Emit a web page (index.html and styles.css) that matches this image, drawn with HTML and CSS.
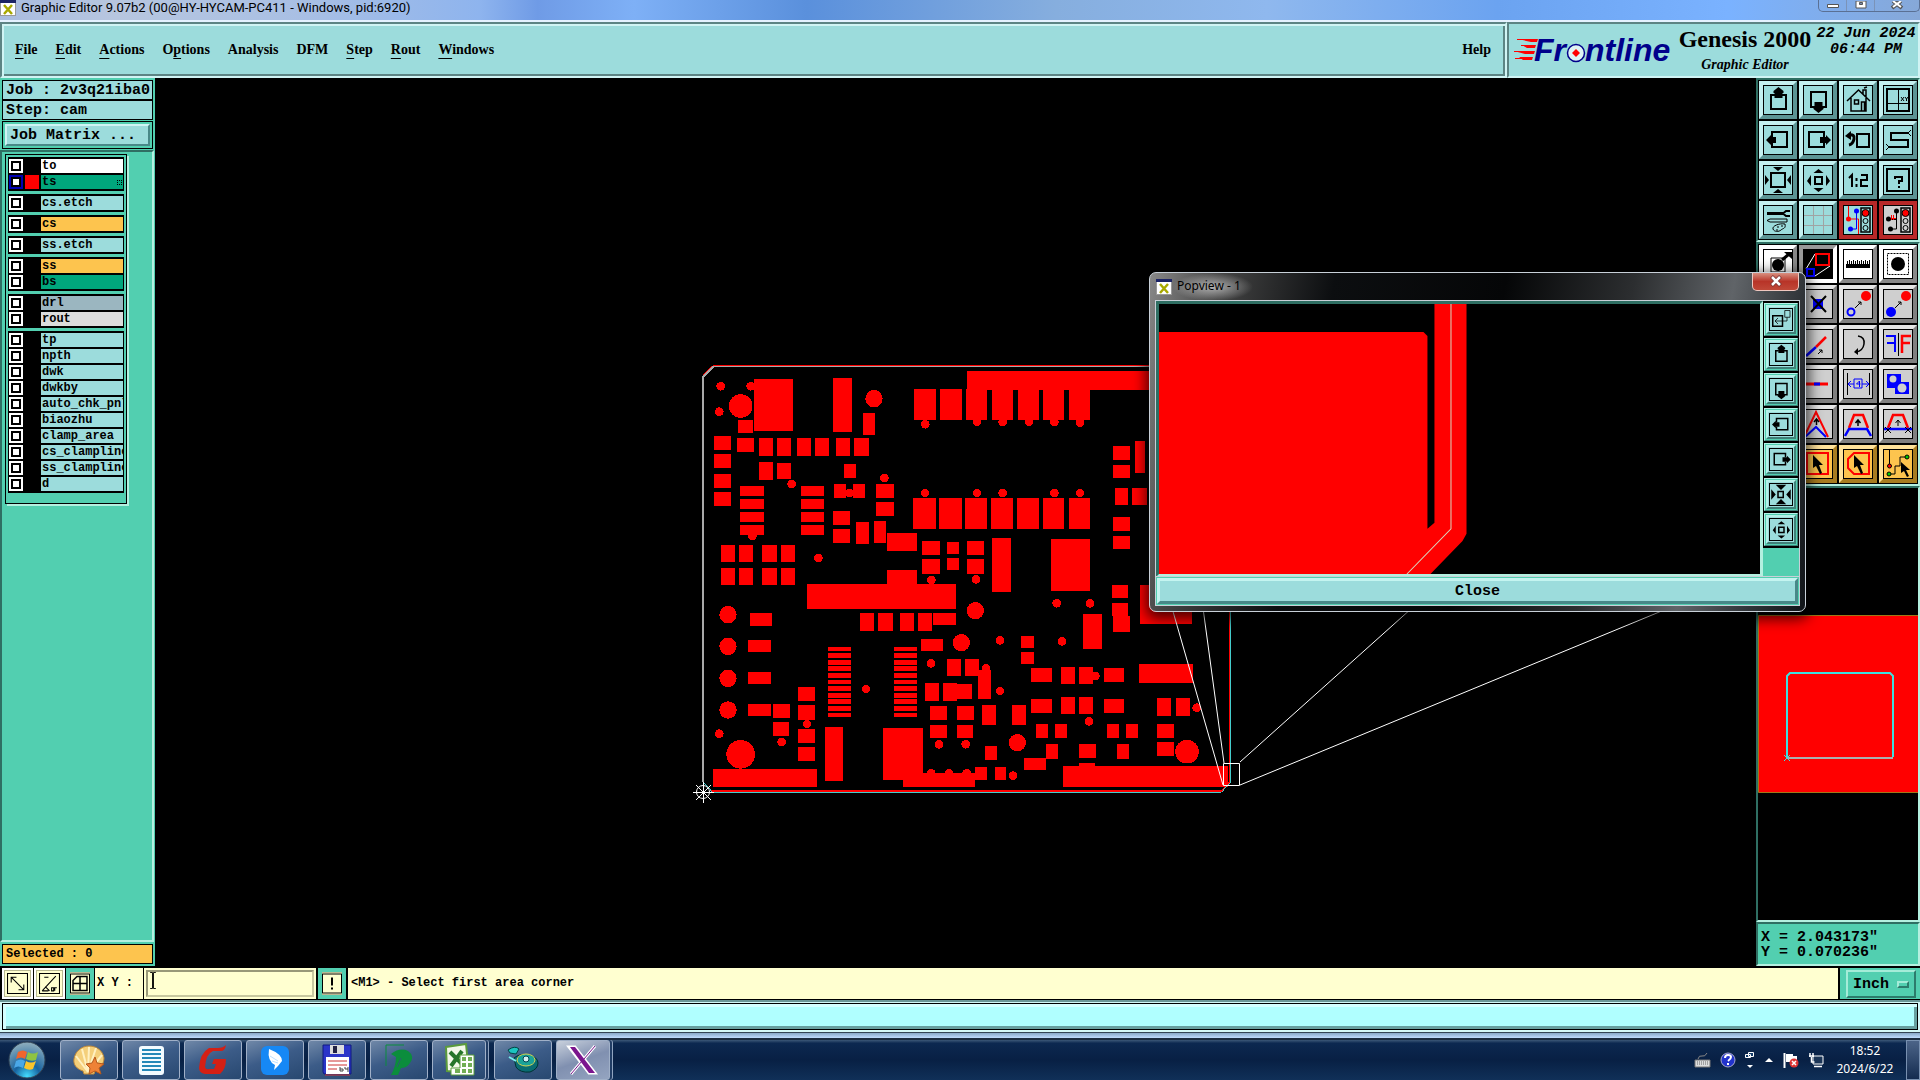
FILE: index.html
```html
<!DOCTYPE html>
<html lang="en">
  <head>
    <meta charset="utf-8">
    <title>Graphic Editor 9.07b2</title>
    <link rel="stylesheet" href="styles.css">
  </head>
  <body>
    <!-- shared icons -->
    <svg class="defs" width="0" height="0">
      <symbol id="i-up" viewBox="0 0 28 28"><path d="M11 9H7v14h15V9h-4" fill="none" stroke="#000" stroke-width="2"/><path d="M14.500 1l5 4v2h-1v5h-8V7h-1V5z"/></symbol>
      <symbol id="i-down" viewBox="0 0 28 28"><path d="M11 21H7V6h15v15h-4" fill="none" stroke="#000" stroke-width="2"/><path d="M14.500 27l5-4v-2h-1v-5h-8v5h-1v2z"/></symbol>
      <symbol id="i-left" viewBox="0 0 28 28"><path d="M8 11V6h15v15H8v-4" fill="none" stroke="#000" stroke-width="2"/><path d="M2 14l5-5v2h5v6H7v2z"/></symbol>
      <symbol id="i-right" viewBox="0 0 28 28"><path d="M20 11V6H5v15h15v-4" fill="none" stroke="#000" stroke-width="2"/><path d="M27 14l-5-5v2h-6v6h6v2z"/></symbol>
      <symbol id="i-in" viewBox="0 0 28 28"><path d="M7 7h14v14H7z" fill="none" stroke="#000" stroke-width="2"/><path d="M9 1h10l-5 4zM9 27h10l-5-4zM1 9v10l4-5zM27 9v10l-4-5z"/></symbol>
      <symbol id="i-out" viewBox="0 0 28 28"><path d="M11 11h7v7h-7z" fill="none" stroke="#000" stroke-width="2"/><path d="M9.500 7h10l-5-4zM9.500 22h10l-5 4zM7 9v11l-4-5zM22 9v11l4-5z"/></symbol>
      <symbol id="x-app" viewBox="0 0 16 16"><path d="M0 0h16v16H0z" fill="#999"/><path d="M0 0h16v3H0z" fill="#1c2466"/><path d="M1 3h14v12H1z" fill="#fff"/><path d="M4 5l8 9M12 5l-8 9" stroke="#a8a800" stroke-width="2.500"/></symbol>
    </svg>

    <header class="titlebar">
      <svg class="app-icon"><use href="#x-app"/></svg>
      <span class="title-text">Graphic Editor 9.07b2 (00@HY-HYCAM-PC411 - Windows, pid:6920)</span>
      <div class="window-buttons">
        <button aria-label="Minimize"><svg width="14" height="10"><path d="M1.500 3.500h11v3h-11z" fill="#fff" stroke="#555"/></svg></button>
        <button aria-label="Restore"><svg width="14" height="10"><path d="M2 0h10v7H2z" fill="#fff" stroke="#555"/><path d="M5.500 1.500h3v2h-3z" fill="#78a" stroke="#555"/></svg></button>
        <button class="wide" aria-label="Close"><svg width="14" height="10"><path d="M3 0l4 3 4-3M2 7l5-4 5 4" fill="none" stroke="#555" stroke-width="4"/><path d="M3 0l4 3 4-3M3 6l4-3 4 3" fill="none" stroke="#fff" stroke-width="2"/></svg></button>
      </div>
    </header>

    <div class="top">
      <nav class="menubar">
        <a href="#"><u>F</u>ile</a>
        <a href="#"><u>E</u>dit</a>
        <a href="#"><u>A</u>ctions</a>
        <a href="#">O<u>p</u>tions</a>
        <a href="#">Analysis</a>
        <a href="#">DFM</a>
        <a href="#"><u>S</u>tep</a>
        <a href="#"><u>R</u>out</a>
        <a href="#"><u>W</u>indows</a>
        <a class="help" href="#">Help</a>
      </nav>
      <div class="brand">
        <svg class="logo" width="162" height="34" viewBox="0 0 162 34">
          <path d="M4 6h20l-1 3h-6zM8 12h14l-1 3H13zM0 18h21l-1 3h-9zM5 24h14l-1 3H9z" fill="#f00"/>
          <path d="M3 6.500h18M7 12.500h14M0 18.500h19M1 25.500h17" stroke="#f00"/>
          <g class="logo-text">
            <text x="20" y="28">Fr</text>
            <text x="71" y="28">ntline</text>
          </g>
          <circle cx="62" cy="20" r="8.500" fill="#dff4f4" stroke="#00008b" stroke-width="1.500"/>
          <path d="M62 16l4 4-4 4-4-4z" fill="#f00"/>
        </svg>
        <div class="product">
          <strong>Genesis 2000</strong>
          <em>Graphic Editor</em>
        </div>
        <time class="stamp">22 Jun 2024<br>06:44 PM</time>
      </div>
    </div>

    <main>
      <aside class="left">
        <div class="job">Job : 2v3q21iba0</div>
        <div class="job">Step: cam</div>
        <div class="matrix"><button>Job Matrix ...</button></div>
        <div class="layers-area">
          <div class="layers">
            <div class="group">
              <label class="layer"><input type="checkbox"><i></i><span class="white">to</span></label>
              <label class="layer"><input type="checkbox" class="work"><i class="red"></i><span class="green">ts<b></b></span></label>
            </div>
            <div class="group">
              <label class="layer"><input type="checkbox"><i></i><span>cs.etch</span></label>
            </div>
            <div class="group">
              <label class="layer"><input type="checkbox"><i></i><span class="orange">cs</span></label>
            </div>
            <div class="group">
              <label class="layer"><input type="checkbox"><i></i><span>ss.etch</span></label>
            </div>
            <div class="group">
              <label class="layer"><input type="checkbox"><i></i><span class="orange">ss</span></label>
              <label class="layer"><input type="checkbox"><i></i><span class="green">bs</span></label>
            </div>
            <div class="group">
              <label class="layer"><input type="checkbox"><i></i><span class="drill">drl</span></label>
              <label class="layer"><input type="checkbox"><i></i><span class="rout">rout</span></label>
            </div>
            <div class="group">
              <label class="layer"><input type="checkbox"><i></i><span>tp</span></label>
              <label class="layer"><input type="checkbox"><i></i><span>npth</span></label>
              <label class="layer"><input type="checkbox"><i></i><span>dwk</span></label>
              <label class="layer"><input type="checkbox"><i></i><span>dwkby</span></label>
              <label class="layer"><input type="checkbox"><i></i><span>auto_chk_pnl</span></label>
              <label class="layer"><input type="checkbox"><i></i><span>biaozhu</span></label>
              <label class="layer"><input type="checkbox"><i></i><span>clamp_area</span></label>
              <label class="layer"><input type="checkbox"><i></i><span>cs_clampline</span></label>
              <label class="layer"><input type="checkbox"><i></i><span>ss_clampline</span></label>
              <label class="layer"><input type="checkbox"><i></i><span>d</span></label>
            </div>
          </div>
        </div>
        <div class="selected">Selected : 0</div>
      </aside>

      <section class="canvas">
        <svg viewBox="155 78 1601 888">
          <g transform="translate(700 350) scale(.33333)" shape-rendering="crispEdges">
            <!-- pads, upper half -->
            <path fill="#f00" d="M163 87h116v156h-116zM399 84h57v162h-57zM489 189h36v66h-36zM114 210h45v39h-45z
              M42 258h51v42h-51zM42 312h51v42h-51zM42 372h51v42h-51zM42 426h51v42h-51zM111 264h51v42h-51z
              M177 264h42v54h-42zM231 264h42v54h-42zM291 264h42v54h-42zM345 264h42v54h-42zM408 264h42v54h-42zM462 264h45v54h-45z
              M177 336h42v54h-42zM231 339h42v48h-42zM432 342h36v42h-36zM402 402h36v42h-36zM459 402h36v42h-36z
              M528 402h54v42h-54zM528 456h54v42h-54z
              M120 408h72v30h-72zM120 447h72v30h-72zM120 486h72v30h-72zM120 525h72v30h-72z
              M303 408h69v30h-69zM303 447h69v30h-69zM303 486h69v30h-69zM303 525h69v30h-69z
              M399 483h51v42h-51zM399 537h51v42h-51zM468 516h39v66h-39zM522 513h36v66h-36zM561 549h90v54h-90zM561 660h90v44h-90z
              M63 585h42v51h-42zM117 585h42v51h-42zM186 585h45v51h-45zM243 585h42v51h-42z
              M63 654h42v51h-42zM117 654h42v51h-42zM186 654h45v51h-45zM243 654h42v51h-42z
              M642 117h66v93h-66zM720 117h66v93h-66zM639 444h69v93h-69zM717 444h69v93h-69z
              M666 573h54v42h-54zM666 627h54v45h-54zM741 576h36v36h-36zM741 624h36v36h-36z
              M801 63h680v57h-680zM798 117h63v93h-63zM876 117h63v93h-63zM954 117h63v93h-63zM1029 117h63v93h-63zM1107 117h63v93h-63z
              M795 444h66v93h-66zM873 444h66v93h-66zM951 444h66v93h-66zM1029 444h63v93h-63zM1107 444h63v93h-63z
              M1239 288h51v42h-51zM1239 345h51v39h-51zM1305 273h30v96h-30zM1245 414h39v51h-39zM1296 414h45v51h-45z
              M1239 501h51v42h-51zM1239 558h51v39h-51zM801 573h51v42h-51zM801 627h51v45h-51zM876 564h57v162h-57zM1053 567h117v156h-117z"/>
            <!-- pads, lower half -->
            <path fill="#f00" d="M1236 705h48v39h-48zM1236 759h48v39h-48zM1239 798h51v48h-51zM1320 705h156v116h-156zM321 702h447v75h-447z
              M150 789h66v39h-66zM144 870h69v36h-69zM144 966h69v36h-69zM144 1062h69v36h-69z
              M480 789h42v54h-42zM534 789h45v54h-45zM600 789h42v54h-42zM654 789h42v54h-42zM699 789h69v36h-69zM663 867h66v36h-66z
              M741 927h42v51h-42zM795 927h42v51h-42zM294 1011h51v42h-51zM294 1065h51v45h-51zM294 1137h51v42h-51zM294 1191h51v42h-51z
              M219 1062h51v42h-51zM219 1116h48v42h-48zM39 1257h312v54h-312zM375 1131h54v162h-54zM549 1134h120v156h-120zM609 1269h216v42h-216z
              M675 999h42v54h-42zM729 999h42v54h-42zM770 1002h46v45h-46zM690 1068h51v42h-51zM771 1068h51v42h-51zM690 1125h51v39h-51zM771 1125h48v39h-48z
              M825 1251h36v39h-36zM834 960h39v87h-39zM963 858h39v36h-39zM963 906h39v36h-39zM1149 792h57v105h-57z
              M993 954h63v42h-63zM1083 951h42v51h-42zM1137 951h42v51h-42zM1212 954h60v42h-60zM1317 942h162v57h-162z
              M993 1047h63v42h-63zM1083 1041h42v51h-42zM1137 1041h42v51h-42zM1212 1047h60v42h-60zM1371 1044h42v54h-42zM1428 1044h42v54h-42z
              M846 1065h42v60h-42zM936 1065h42v60h-42zM1008 1122h36v42h-36zM1065 1122h36v42h-36zM1221 1122h36v42h-36zM1278 1122h36v42h-36z
              M1371 1122h51v42h-51zM1371 1176h51v42h-51zM855 1188h36v42h-36zM1038 1182h36v45h-36zM1137 1182h51v42h-51zM1251 1182h36v45h-36z
              M972 1224h66v36h-66zM885 1251h33v39h-33zM1137 1239h48v10h-48zM1089 1248h495v63h-495z"/>
            <!-- connector fingers -->
            <path fill="#f00" d="M384 891h69v12h-69zM384 909h69v15h-69zM384 930h69v15h-69zM384 948h69v15h-69zM384 969h69v15h-69zM384 990h69v12h-69zM384 1008h69v15h-69zM384 1029h69v15h-69zM384 1047h69v15h-69zM384 1068h69v15h-69zM384 1089h69v12h-69z
              M582 891h69v12h-69zM582 909h69v15h-69zM582 930h69v15h-69zM582 948h69v15h-69zM582 969h69v15h-69zM582 990h69v12h-69zM582 1008h69v15h-69zM582 1029h69v15h-69zM582 1047h69v15h-69zM582 1068h69v15h-69zM582 1089h69v12h-69z"/>
            <!-- round pads: zero length strokes with round caps -->
            <path class="dot" stroke-width="26" d="M62 109h0M58 185h0M152 109h0M448 429h0M157 558h0M275 402h0M355 624h0M553 384h0M675 429h0M676 223h0M694 690h0
              M831 216h0M908 216h0M987 216h0M1063 216h0M1140 218h0M831 429h0M908 429h0M1063 429h0M1140 429h0M828 688h0
              M693 940h0M498 1017h0M321 1122h0M245 1176h0M58 1151h0M717 1183h0M797 1183h0M694 1270h0M747 1270h0M800 1270h0
              M858 955h0M900 871h0M900 1023h0M1070 760h0M1170 760h0M1086 874h0M1186 978h0M1490 1073h0M1167 1114h0M939 1277h0"/>
            <path class="dot" stroke-width="52" d="M522 146h0M84 794h0M84 889h0M84 985h0M84 1080h0M784 878h0M826 782h0M952 1178h0"/>
            <path class="dot" stroke-width="71" d="M122 168h0M1461 1205h0"/>
            <path class="dot" stroke-width="86" d="M122 1213h0"/>
            <!-- board outline -->
            <path d="M10 76L40 47H1588V1297L1564 1323H36L10 1297" fill="none" stroke="#f00" stroke-width="4"/>
            <path d="M10 1297V80L40 50H1592V1297" fill="none" stroke="#a8a8a8" stroke-width="5"/>
            <path d="M1592 200V1297L1564 1327H38L10 1297" fill="none" stroke="#4cc" stroke-width="3"/>
          </g>
          <g fill="none" stroke="#fff">
            <path d="M1172 608l51 177M1203 608l21 155M1240 762l172-154M1240 785l429-177M1223.500 763.500h16v22h-16z"/>
            <circle cx="703" cy="792" r="6.500"/>
            <path d="M703.500 782v21M693 792.500h21M696 785l15 15M711 785l-15 15"/>
          </g>
        </svg>
      </section>

      <aside class="right">
        <div class="tools view-tools">
          <button aria-label="Pan up"><svg><use href="#i-up"/></svg></button>
          <button aria-label="Pan down"><svg><use href="#i-down"/></svg></button>
          <button aria-label="Home"><svg viewBox="0 0 28 28"><path d="M7 12v13h15V12M3 15L14.500 4 26 15M19 8V4h3v7M10.500 14h4v4h-4zM17.500 25v-9h3v9M20 2l3-1" fill="none" stroke="#000" stroke-width="1.500"/></svg></button>
          <button aria-label="Zoom to XY"><svg viewBox="0 0 28 28"><path d="M3 3h22v22H3z" fill="none" stroke="#000" stroke-width="2"/><path d="M14.500 3v22M3 17.500h22" stroke="#000"/><path d="M17 11l3 4M20 11l-3 4M21 11l1.500 2 1.500-2M22.500 13v2" fill="none" stroke="#000"/></svg></button>

          <button aria-label="Pan left"><svg><use href="#i-left"/></svg></button>
          <button aria-label="Pan right"><svg><use href="#i-right"/></svg></button>
          <button aria-label="Previous view"><svg viewBox="0 0 28 28"><path d="M13 8h12v13H13z" fill="none" stroke="#000" stroke-width="2"/><path d="M5 9q6-1 5 4t-5 6" fill="none" stroke="#000" stroke-width="3"/><path d="M1 10l6-5v9z"/></svg></button>
          <button aria-label="Serpentine"><svg viewBox="0 0 28 28"><path d="M24 7H7v7h17v7H5" fill="none" stroke="#000" stroke-width="2"/><path d="M24 7l3-3M24 7l3 3M5 21l-3-3M5 21l-3 3" stroke="#000"/></svg></button>

          <button aria-label="Zoom in"><svg><use href="#i-in"/></svg></button>
          <button aria-label="Zoom out"><svg><use href="#i-out"/></svg></button>
          <button aria-label="Scale 1:2"><svg viewBox="0 0 28 28"><path d="M5 12l3-3v12M12.500 12v3M12.500 18v3M17 9h6v5h-6v6h7" fill="none" stroke="#000" stroke-width="2"/></svg></button>
          <button aria-label="Query"><svg viewBox="0 0 28 28"><path d="M3 3h22v22H3zM11 13v-2h7v4h-3v3M15 20v2" fill="none" stroke="#000" stroke-width="2"/></svg></button>

          <button aria-label="Setup"><svg viewBox="0 0 28 28"><path d="M3 7.500h16" stroke="#000" stroke-width="3"/><path d="M26 5h-4l-3 2.500 3 2.500h4" fill="none" stroke="#000" stroke-width="2"/><path d="M3 14.500l3-1.500h17v3H6z" fill="none" stroke="#000"/><path d="M21 18c-6-1-13 2-12 5s6 3 8 1 5-1 4-6zM13 21h2M17 20h2M12 24h2" fill="none" stroke="#000"/></svg></button>
          <button aria-label="Grid"><svg viewBox="0 0 28 28"><path d="M9.500 0v28M19.500 0v28M0 9.500h28M0 19.500h28" stroke="#a0a4a4"/></svg></button>
          <button class="alert" aria-label="Net analyzer"><svg viewBox="0 0 28 28"><path d="M4.500 0v13h10v15" fill="none" stroke="#f00"/><path d="M12.500 5v18H6" fill="none" stroke="#00f"/><path d="M4.500 13h0" stroke="#f00" stroke-width="5" stroke-linecap="round"/><path d="M12.500 5h0M6.500 23h0" stroke="#00f" stroke-width="5" stroke-linecap="round"/><path d="M17 2h9v24h-9z" fill="none" stroke="#000" stroke-width="1.500"/><circle cx="21.500" cy="7" r="3.500" fill="#f00" stroke="#000"/><circle cx="21.500" cy="15" r="2.500" fill="none" stroke="#000"/><circle cx="21.500" cy="22" r="2.500" fill="none" stroke="#000"/></svg></button>
          <button class="alert grey" aria-label="Short check"><svg viewBox="0 0 28 28"><path d="M12.500 5v18H6M4 13.500h9" fill="none" stroke="#000"/><path d="M7.500 9v5M9.500 9v5M6 12.500h6" stroke="#f00"/><path d="M12.500 5h0M4.500 13h0M6.500 23h0" stroke="#000" stroke-width="5" stroke-linecap="round"/><path d="M17 2h9v24h-9z" fill="none" stroke="#000" stroke-width="1.500"/><circle cx="21.500" cy="7" r="3.500" fill="#f00" stroke="#000"/><circle cx="21.500" cy="15" r="2.500" fill="none" stroke="#000"/><circle cx="21.500" cy="22" r="2.500" fill="none" stroke="#000"/></svg></button>
        </div>

        <div class="tools edit-tools">
          <button class="white" aria-label="Select"><svg viewBox="0 0 28 28"><path d="M7 8h14v14H7z" fill="none" stroke="#000"/><circle cx="14" cy="15" r="6"/><path d="M18 10l7-6" stroke="#000" stroke-width="3"/><path d="M20 2h8v7z"/></svg></button>
          <button class="black" aria-label="Popview"><svg viewBox="0 0 28 28"><path d="M11 4L2 19M26 16L11 26" stroke="#fff"/><path d="M12 4h13v11H12z" fill="none" stroke="#f00" stroke-width="2"/><path d="M3 19h7v7H3z" fill="none" stroke="#00f" stroke-width="2"/></svg></button>
          <button class="white" aria-label="Measure"><svg viewBox="0 0 28 28"><path d="M2 18h24v-8h-1v4h-1v-3h-1v3h-1v-4h-1v4h-1v-3h-1v3h-1v-4h-1v4h-1v-3h-1v3h-1v-4h-1v4h-1v-3h-1v3h-1v-4H9v4H8v-3H7v3H6v-4H5v4H4v-3H3v3H2z"/></svg></button>
          <button class="white" aria-label="Select frame"><svg viewBox="0 0 28 28"><path d="M3.500 3.500h21v21h-21z" fill="none" stroke="#000" stroke-dasharray="2 1"/><circle cx="14" cy="14" r="7"/></svg></button>

          <button aria-label="Add"><svg viewBox="0 0 28 28"><circle cx="14" cy="14" r="5" fill="#f00"/></svg></button>
          <button aria-label="Delete"><svg viewBox="0 0 28 28"><path d="M9 9h10v10H9z" fill="#00f"/><path d="M7 6l15 16M22 6L7 22" stroke="#000" stroke-width="2"/></svg></button>
          <button aria-label="Move"><svg viewBox="0 0 28 28"><circle cx="7" cy="22" r="3.500" fill="none" stroke="#00f" stroke-width="2"/><circle cx="22" cy="6" r="5" fill="#f00"/><path d="M11 18l6-6M14 12h3v3" fill="none" stroke="#000"/></svg></button>
          <button aria-label="Copy"><svg viewBox="0 0 28 28"><circle cx="7" cy="22" r="5" fill="#00f"/><circle cx="22" cy="6" r="5" fill="#f00"/><path d="M11 18l6-6M14 12h3v3" fill="none" stroke="#000"/></svg></button>

          <button aria-label="Mirror"><svg viewBox="0 0 28 28"><path d="M4 24L14 14" stroke="#00f" stroke-width="3"/></svg></button>
          <button aria-label="Resize"><svg viewBox="0 0 28 28"><path d="M2 26l10-9" stroke="#00f" stroke-width="2.500"/><path d="M12 17L22 7" stroke="#f00" stroke-width="2.500"/><path d="M14 24l4-4M15 20h3v3" fill="none" stroke="#000"/></svg></button>
          <button aria-label="Rotate"><svg viewBox="0 0 28 28"><path d="M14 6q7 1 6 8t-8 8" fill="none" stroke="#000" stroke-width="1.500"/><path d="M10 22l4-4v7z"/></svg></button>
          <button aria-label="Flip"><svg viewBox="0 0 28 28"><path d="M2 6h9v16M3 13h8" fill="none" stroke="#00f" stroke-width="2"/><path d="M14.500 3v23" stroke="#000"/><path d="M18 23V6h9M18 13h8" fill="none" stroke="#f00" stroke-width="2.500"/></svg></button>

          <button aria-label="Break"><svg viewBox="0 0 28 28"><path d="M4 14h20" stroke="#f00" stroke-width="2"/></svg></button>
          <button aria-label="Join"><svg viewBox="0 0 28 28"><path d="M2 14h22" stroke="#f00" stroke-width="3"/><path d="M10 14h6" stroke="#00f" stroke-width="3"/></svg></button>
          <button aria-label="Spacing"><svg viewBox="0 0 28 28"><path d="M3.500 3v22M25.500 3v22" stroke="#000"/><path d="M10 9h8v9h-8zM4 14h6M18 14h7M7 11l-3 3 3 3M22 11l3 3-3 3M15.500 17v-6l-3 3h4" fill="none" stroke="#00f"/></svg></button>
          <button aria-label="Surface"><svg viewBox="0 0 28 28"><path d="M3 4h14v8h8v12H11v-6H3z" fill="#00f"/><circle cx="9" cy="9" r="3.500" fill="#cfcfcf"/><circle cx="18" cy="18" r="4.500" fill="#cfcfcf"/></svg></button>

          <button aria-label="Chamfer"><svg viewBox="0 0 28 28"><path d="M2 24l12-18 12 18" fill="none" stroke="#f00" stroke-width="2"/></svg></button>
          <button aria-label="Corner"><svg viewBox="0 0 28 28"><path d="M1 25L12 2l12 25" fill="none" stroke="#f00" stroke-width="2"/><path d="M1 27l11-10 10 10" fill="none" stroke="#00f" stroke-width="2"/><path d="M12.500 15v-5M10 12l2.500-3 2.500 3" fill="none" stroke="#000" stroke-width="1.500"/></svg></button>
          <button aria-label="Slide"><svg viewBox="0 0 28 28"><path d="M5 18l5-13h9l5 13" fill="none" stroke="#f00" stroke-width="2.500"/><path d="M1 26l4-7h18l4 7" fill="none" stroke="#00f" stroke-width="2.500"/><path d="M14 16v-6M11.500 13L14 10l2.500 3" fill="none" stroke="#000" stroke-width="1.500"/></svg></button>
          <button aria-label="Slide segment"><svg viewBox="0 0 28 28"><path d="M4 18L9 5h10l5 13" fill="none" stroke="#f00" stroke-width="2.500"/><path d="M0 19h28" stroke="#00f" stroke-width="2.500"/><path d="M14 16v-6M11.500 13L14 10l2.500 3M1 17l6 6M7 17l-6 6M21 17l6 6M27 17l-6 6" fill="none" stroke="#000"/></svg></button>

          <button class="orange" aria-label="Pick"><svg viewBox="0 0 28 28"><path d="M9 5v15l4-4 4 9 3-2-4-8h5z"/></svg></button>
          <button class="orange" aria-label="Pick in frame"><svg viewBox="0 0 28 28"><path d="M3 3h21v21H3z" fill="none" stroke="#f00" stroke-width="2"/><path d="M9 5v13l3-2 4 8 2-1-3-8h4z"/></svg></button>
          <button class="orange" aria-label="Pick in polygon"><svg viewBox="0 0 28 28"><path d="M10 3h15v21H10l-6-6V9z" fill="none" stroke="#f00" stroke-width="2"/><path d="M10 5v13l3-2 4 8 2-1-3-8h4z"/></svg></button>
          <button class="orange" aria-label="Pick net"><svg viewBox="0 0 28 28"><path d="M5.500 0v15M5 24h6v-8h5V7h6" fill="none" stroke="#000"/><circle cx="5.500" cy="16" r="2" fill="#f00" stroke="#000"/><circle cx="5" cy="24" r="2" fill="#0c0" stroke="#000"/><circle cx="23" cy="7" r="2" fill="#0c0" stroke="#000"/><path d="M17 12v11l3-2 3 6 2-1-3-6h4z"/></svg></button>
        </div>

        <div class="minimap">
          <svg viewBox="0 0 160 432" preserveAspectRatio="none">
            <path d="M.5 127.500h160v177H.5z" fill="#f00" stroke="#a07818"/>
            <path d="M29 269v-81l3-3h100l3 3v81" fill="none" stroke="#3ce0e0" stroke-width="2"/>
            <path d="M29 270h106" stroke="#a8b0b0" stroke-width="2"/>
            <path d="M26 267l6 6M32 267l-6 6" stroke="#3ce0e0"/>
          </svg>
        </div>
        <div class="coords">X = 2.043173"<br>Y = 0.070236"</div>
      </aside>
    </main>

    <div class="command">
      <button aria-label="Absolute"><svg viewBox="0 0 20 20"><path d="M.5.500h19v19H.5z" fill="none" stroke="#000"/><path d="M4 4l12 12M4 9V4h5M16 11v5h-5" fill="none" stroke="#000"/></svg></button>
      <button aria-label="Angle"><svg viewBox="0 0 20 20"><path d="M.5.500h19v19H.5z" fill="none" stroke="#000"/><path d="M3 17L16 3M5 4h4M3 17h6M6 13l4 4M12 17v-3h2v3zM15 17v-3h2" fill="none" stroke="#000"/></svg></button>
      <button class="on" aria-label="Snap"><svg viewBox="0 0 20 20"><path d="M.5.500h19v19H.5z" fill="none" stroke="#000"/><path d="M7 3h10v14H3V7zM10 3v14M3 10h14" fill="none" stroke="#000" stroke-width="1.500"/></svg></button>
      <label for="xy">X Y :</label>
      <div class="xy">
        <input id="xy" type="text">
        <svg class="caret" viewBox="0 0 6 18"><path d="M0 .5h2.500v17H0M6 .5H3.500v17H6" fill="none" stroke="#000"/></svg>
      </div>
      <button class="on bang" aria-label="Alert"><svg viewBox="0 0 20 20"><path d="M.5.500h19v19H.5z" fill="none" stroke="#000"/><path d="M10 4v8M10 14v2" stroke="#000" stroke-width="2"/></svg></button>
      <div class="hint">&lt;M1&gt; - Select first area corner</div>
      <div class="units"><button>Inch <span></span></button></div>
    </div>

    <div class="message"><div></div></div>
    <div class="frame-bottom"></div>

    <footer class="taskbar">
      <button class="start" aria-label="Start"><svg width="40" height="40" viewBox="0 0 40 40">
        <defs><radialGradient id="orb" cx=".5" cy=".95" r=".9"><stop offset="0" stop-color="#4df"/><stop offset=".4" stop-color="#1763a0"/><stop offset="1" stop-color="#8ab"/></radialGradient></defs>
        <circle cx="20" cy="20" r="18" fill="url(#orb)" stroke="#345"/>
        <path d="M11 12q5-3 9 0l-2 7q-4-3-9 0z" fill="#f0652c"/><path d="M21 12q5 3 10 0l-2 8q-5 2-10-1z" fill="#8fc341"/>
        <path d="M9 21q5-3 9 0l-2 7q-5-3-9 0z" fill="#4aa8e8"/><path d="M19 21q5 3 10 0l-3 8q-4 2-9-1z" fill="#fbc52c"/></svg></button>
      <button aria-label="Shell"><svg viewBox="0 0 34 34"><path d="M12 31l-1-3C5 26 1 22 2 16 3 9 9 3 17 3s14 5 15 12c0 6-4 10-9 13l-1 3z" fill="#f4cf7a" stroke="#c08a3a"/><path d="M16 29L4 13M16 29L10 6M16 29L17 4M16 29l8-24M16 29l14-17" stroke="#fff0c0" stroke-width="2"/><path d="M23 14l2 6 7 1-5 4 2 6-6-3-6 3 1-6-4-4 6-1z" fill="#ee8236" stroke="#b5591c"/></svg></button>
      <button aria-label="Notes"><svg viewBox="0 0 34 34"><rect x="5" y="3" width="25" height="29" rx="3" fill="#f3fbff"/><path d="M8 7h19M8 11h19M8 15h19M8 19h19M8 23h19M8 27h19" stroke="#2488b8" stroke-width="2"/></svg></button>
      <button aria-label="G"><svg viewBox="0 0 34 34"><path d="M30 2q-1 6-5 6h-8Q10 11 9 24q1 3 4 2h5l2-5h-4l2-5h12q0 10-6 15H9q-6-1-6-6Q4 10 13 5h9q5 0 8-3z" fill="#d42015"/></svg></button>
      <button aria-label="Wing"><svg viewBox="0 0 34 34"><rect x="3" y="3" width="28" height="29" rx="6" fill="#1688f5"/><path d="M11 6q13 5 13 12l-4 5-4 4 1-5q-8-4-6-16z" fill="#fff"/><path d="M12 13l8 5M14 18l6 2" stroke="#bfe0ff"/></svg></button>
      <button aria-label="Disk"><svg viewBox="0 0 34 34"><path d="M3 2h28v29H4l-1-2z" fill="#2b35c8" stroke="#101a80"/><path d="M10 2h14v9H10z" fill="#ddd"/><path d="M13 3h4v7h-4z" fill="#224"/><path d="M6 14h23v17H6z" fill="#fff"/><path d="M8 18h19M8 22h19M8 26h9" stroke="#c33"/><path d="M20 24v4h3v-2h-3M25 24v2h3M28 24v5" fill="none" stroke="#444"/><path d="M5 32h25" stroke="#c33"/></svg></button>
      <button aria-label="P"><svg viewBox="0 0 34 34"><path d="M4 23V2h18" fill="none" stroke="#0b8d3c"/><path d="M9 32q5-9 5-18l-5-3q9-7 17-3 7 5 2 12-3 5-9 5l-3 7z" fill="#0b8d3c"/><path d="M15 24l4-9" stroke="#2d5c72"/></svg></button>
      <button class="stack" aria-label="Spreadsheet"><svg viewBox="0 0 34 34"><path d="M4 4l20-3 3 29-22-2z" fill="#f3f8e9" stroke="#5b9b3c" stroke-width="2"/><path d="M8 9l13 13M20 8L9 23" stroke="#26752a" stroke-width="4"/><path d="M18 12h14v20H9v-7h9z" fill="#fff" stroke="#579c3b"/><path d="M20 14h4v4h-4zM26 14h4v4h-4zM20 20h4v4h-4zM26 20h4v4h-4zM13 26h5v4h-5zM20 26h4v4h-4zM26 26h4v4h-4z" fill="#72ae54"/></svg></button>
      <button aria-label="Camera"><svg viewBox="0 0 34 34"><path d="M8 15q6-5 14-3 10 2 10 8t-8 9q-10 1-14-5z" fill="#0a6c72" stroke="#033"/><ellipse cx="20" cy="17" rx="9" ry="6" fill="#1aa398" stroke="#d7d452"/><ellipse cx="20" cy="16" rx="3" ry="3" fill="#d4efef" stroke="#045"/><path d="M2 7q7-5 11-1l-3 5-6-1z" fill="#1cc4c0" stroke="#044"/><path d="M3 14l7 4" stroke="#7ee" stroke-width="2"/></svg></button>
      <button class="stack active" aria-label="X server"><svg viewBox="0 0 34 34"><path d="M29 3L18 16M16 18L5 31" stroke="#fff" stroke-width="3"/><path d="M3 4h6l20 26h-6z" fill="#7b168d" stroke="#fff" stroke-width="3"/><path d="M4 4h5l20 26h-6z" fill="#7b168d"/><path d="M29 3L18 16M16 18L5 31" stroke="#7b168d"/></svg></button>

      <div class="tray">
        <svg width="17" height="16" viewBox="0 0 17 16"><path d="M1 8h15v7H1z" fill="#ddd" stroke="#777"/><path d="M3 10h12M3 12h12" stroke="#666" stroke-dasharray="1 1"/><path d="M4 7q1-4 4-3t5-3" fill="none" stroke="#888"/></svg>
        <svg width="16" height="16" viewBox="0 0 16 16"><circle cx="8" cy="8" r="7" fill="#23c" stroke="#aac"/><path d="M5 6q0-3 3-3t3 2-3 4M8 11v2" fill="none" stroke="#fff" stroke-width="2"/></svg>
        <svg width="10" height="18" viewBox="0 0 10 18"><path d="M3.500 1.500h5v4h-5zM.5 3.500h5v3h-5z" fill="#123a68" stroke="#fff"/><path d="M2 14h6l-3 3z" fill="#fff"/></svg>
        <svg width="10" height="8" viewBox="0 0 10 8"><path d="M1 6l4-4 4 4z" fill="#fff"/></svg>
        <svg width="16" height="16" viewBox="0 0 16 16"><path d="M1.500 1v15" stroke="#fff" stroke-width="2"/><path d="M3 2h7v2h4v6H3z" fill="#fff"/><circle cx="11" cy="11" r="4.500" fill="#d33"/><path d="M9 9l4 4M13 9l-4 4" stroke="#fff" stroke-width="1.500"/></svg>
        <svg width="16" height="16" viewBox="0 0 16 16"><path d="M5 4h10v8H5z" fill="#1b3557" stroke="#fff"/><path d="M6 14.500h8M2 1v4M5 1v4M1 4h5M3.500 5v5h3" fill="none" stroke="#fff" stroke-width="1.500"/></svg>
        <time class="clock">18:52<br>2024/6/22</time>
        <button class="show-desktop" aria-label="Show desktop"></button>
      </div>
    </footer>

    <div class="popview" role="dialog" aria-label="Popview - 1">
      <div class="pop-title">
        <svg class="app-icon"><use href="#x-app"/></svg>
        <span>Popview - 1</span>
        <button class="pop-x" aria-label="Close window"><svg width="14" height="12"><path d="M2.500 1.500l9 9M11.500 1.500l-9 9" stroke="#733" stroke-width="4"/><path d="M3 2l8 8M11 2l-8 8" stroke="#fff" stroke-width="2.500"/></svg></button>
      </div>
      <div class="pop-body">
        <div class="pop-view">
          <svg viewBox="0 0 600 269" preserveAspectRatio="none">
            <path d="M0 28h264l4 4v192l7-6V0h32v229l-4 7-32 33H0z" fill="#f00"/>
            <path d="M291.500 0v224l-44 45" fill="none" stroke="#d8d8c0"/>
          </svg>
        </div>
        <div class="pop-tools">
          <button aria-label="Popview frame"><svg viewBox="0 0 28 28"><path d="M3 9h13v14H3z" fill="none" stroke="#000" stroke-width="2"/><path d="M19 2h7v9h-7zM6 16h16v-5M10 12l-4 4 4 4" fill="none" stroke="#000"/></svg></button>
          <button aria-label="Up"><svg><use href="#i-up"/></svg></button>
          <button aria-label="Down"><svg><use href="#i-down"/></svg></button>
          <button aria-label="Left"><svg><use href="#i-left"/></svg></button>
          <button aria-label="Right"><svg><use href="#i-right"/></svg></button>
          <button aria-label="Zoom in"><svg viewBox="0 0 28 28"><path d="M10 10h7v8h-7z" fill="none" stroke="#000" stroke-width="2"/><path d="M7 1h14l-7 7zM7 27h14l-7-7zM1 7v14l6-7zM27 7v14l-6-7z"/></svg></button>
          <button aria-label="Zoom out"><svg><use href="#i-out"/></svg></button>
        </div>
      </div>
      <div class="pop-close"><button>Close</button></div>
    </div>
  </body>
</html>
```

FILE: styles.css
```css
* {
  box-sizing:border-box;
}

html, body {
  margin:0;
  height:100%;
}

body {
  display:flex;
  flex-direction:column;
  position:relative;
  overflow:hidden;
  background:#000;
  color:#000;
  font-family:"Liberation Mono", monospace;
  font-size:15px;
  font-weight:bold;
}

button {
  margin:0;
  padding:0;
  font:inherit;
  color:inherit;
}

a {
  color:inherit;
  text-decoration:none;
}

.defs {
  position:absolute;
}

/* window title */
.titlebar {
  flex:none;
  display:flex;
  height:22px;
  border-bottom:2px solid #e4f2ff;
  background:linear-gradient(90deg, #a9bce0 0, #b7c6df 6%, #a8bfe4 16%, #8eb4ee 25%, #6f9be6 28%, #7eb0f6 33%, #5a90dc 42%, #86aede 55%, #8fb8ee 66%, #6ba3f0 78%, #7ab2ff 90%, #86a8d8 100%);
  font:13px Roboto, sans-serif;
}

.app-icon {
  flex:none;
  width:16px;
  height:16px;
}

.title-text {
  flex:1;
  padding-left:5px;
  line-height:15px;
}

.window-buttons {
  display:flex;
  height:12px;
  border:1px solid #5a7094;
  border-top:0;
  border-radius:0 0 5px 5px;
}

.window-buttons button {
  width:28px;
  border:0;
  border-right:1px solid #7b93b8;
  background:none;
  line-height:8px;
}

.window-buttons .wide {
  width:44px;
  border:0;
}

/* menu */
.top {
  flex:none;
  display:flex;
  height:56px;
  background:#9cdcdc;
}

.menubar {
  flex:1;
  display:flex;
  align-items:center;
  gap:18px;
  padding:0 14px 0 13px;
  border:2px solid;
  border-color:#5c8484 #d0f4f4 #d0f4f4 #5c8484;
  box-shadow:inset 2px 2px #d0f4f4, inset -2px -2px #5c8484;
  font:bold 14px "Liberation Serif", serif;
}

.menubar u {
  text-underline-offset:4px;
}

.help {
  margin-left:auto;
}

.brand {
  flex:none;
  display:flex;
  width:413px;
  padding-left:5px;
  border:2px solid;
  border-color:#5c8484 #d0f4f4 #d0f4f4 #5c8484;
  font-family:"Liberation Serif", serif;
}

.logo {
  flex:none;
  margin-top:9px;
}

.logo-text {
  font:italic bold 32px "Liberation Sans", sans-serif;
  fill:#00008b;
}

.product {
  flex:1;
  text-align:center;
  white-space:nowrap;
}

.product strong, .product em {
  display:block;
}

.product strong {
  font-size:24px;
  line-height:30px;
}

.product em {
  font-size:14px;
  line-height:22px;
}

.stamp {
  flex:none;
  width:104px;
  padding-top:2px;
  font:italic bold 15px/16px "Liberation Mono", monospace;
  text-align:center;
}

/* main */
main {
  flex:1;
  display:flex;
  min-height:0;
}

.left {
  flex:none;
  display:flex;
  flex-direction:column;
  width:155px;
  padding:2px;
  background:#52cfb0;
}

.job {
  height:20px;
  padding-left:3px;
  border:1px solid #000;
  background:#9cdcdc;
  line-height:19px;
  white-space:nowrap;
}

.matrix {
  margin:1px 0;
  padding:2px;
  border:1px solid #000;
}

.matrix button {
  display:block;
  width:100%;
  height:22px;
  padding-left:3px;
  border:2px solid;
  border-color:#d0f4f4 #488888 #488888 #d0f4f4;
  background:#9cdcdc;
  text-align:left;
  line-height:19px;
}

.layers-area {
  flex:1;
  margin:0 -1px 0 -2px;
  padding:2px 0 0 3px;
  border:2px solid;
  border-color:#2f6f63 #b4f0e0 #b4f0e0 #2f6f63;
}

.layers {
  display:flex;
  flex-direction:column;
  gap:3px;
  width:122px;
  padding:2px 2px 10px;
  border:1px solid #000;
  box-shadow:2px 2px #b4f0e0;
}

.group {
  padding:1px;
  background:#000;
}

.layer {
  display:flex;
  align-items:center;
  gap:2px;
  height:16px;
  font-size:12px;
}

.layer input {
  appearance:none;
  flex:none;
  width:14px;
  height:14px;
  margin:0;
  border:2px solid #fff;
  background:#fff;
  box-shadow:inset 0 0 0 2px #000;
}

.layer .work {
  border-color:#0000b4;
}

.layer i {
  flex:none;
  width:14px;
  height:14px;
}

.layer .red {
  background:#f00;
}

.layer span {
  flex:1;
  min-width:0;
  height:14px;
  padding-left:1px;
  overflow:hidden;
  background:#9cdcdc;
  line-height:14px;
}

.layer .white {
  background:#fff;
}

.layer .green {
  display:flex;
  justify-content:space-between;
  align-items:center;
  background:#00a67c;
}

.layer b {
  width:5px;
  height:5px;
  margin-right:1px;
  border:1px dotted #000;
}

.layer .orange {
  background:#fdc44e;
}

.layer .drill {
  background:#9bb6c0;
}

.layer .rout {
  background:#dcdcdc;
}

.selected {
  height:20px;
  margin-top:2px;
  padding-left:3px;
  border:1px solid #000;
  background:#fdc44e;
  font-size:12px;
  line-height:18px;
}

.canvas {
  flex:1;
  min-width:0;
}

.canvas svg {
  display:block;
  width:100%;
  height:100%;
}

.dot {
  stroke:#f00;
  stroke-linecap:round;
}

/* right side */
.right {
  flex:none;
  display:flex;
  flex-direction:column;
  width:164px;
  background:#000;
}

.tools, .minimap, .coords {
  border:2px solid;
  border-color:#2f6f63 #b4f0e0 #b4f0e0 #2f6f63;
}

.tools {
  display:grid;
  grid-template-columns:repeat(4, 1fr);
}

.tools button {
  height:38px;
  margin:1px;
  border:4px solid;
  border-color:#c4f0f0 #5c9494 #5c9494 #c4f0f0;
  background:#9cdcdc;
}

.tools svg, .pop-tools svg {
  display:block;
  width:100%;
  height:100%;
  border:1px solid #000;
}

.tools .alert {
  border-color:#b82828;
}

.tools .grey {
  background:#cfcfcf;
}

.edit-tools button {
  border-color:#e6e6e6 #808080 #808080 #e6e6e6;
  background:#cfcfcf;
}

.edit-tools .white {
  border-color:#fff #888 #888 #fff;
  background:#fff;
}

.edit-tools .black {
  border-color:#999 #fff #fff #999;
  background:#000;
}

.edit-tools .orange {
  border-color:#ffe29a #a87c20 #a87c20 #ffe29a;
  background:#fdc44e;
}

.minimap {
  flex:1;
  min-height:0;
}

.minimap svg {
  display:block;
  width:100%;
  height:100%;
}

.coords {
  height:44px;
  padding:6px 0 0 3px;
  background:#52cfb0;
  line-height:15px;
}

/* command line */
.command {
  flex:none;
  display:flex;
  height:34px;
  padding:2px 0 1px 2px;
  font-size:12px;
}

.command > button {
  flex:none;
  width:31px;
  margin-right:1px;
  padding:2px 3px;
  border:2px solid #fff;
  background:#ffffd0;
  box-shadow:inset 0 0 0 1px #b8b890;
}

.command > .on {
  width:28px;
  border:4px solid #52cfb0;
  padding:0;
}

.command svg {
  display:block;
  width:100%;
  height:100%;
}

.command label {
  flex:none;
  width:48px;
  padding-left:2px;
  background:#ffffd0;
  line-height:31px;
}

.xy {
  flex:none;
  position:relative;
  width:172px;
  margin-left:1px;
  padding:2px;
  background:#ffffd0;
}

.xy input {
  display:block;
  width:100%;
  height:100%;
  border:2px solid;
  border-color:#989878 #c8c8a0 #c8c8a0 #989878;
  background:#ffffd0;
}

.xy .caret {
  position:absolute;
  top:4px;
  left:6px;
  width:6px;
  height:17px;
}

.command > .bang {
  margin-left:2px;
  margin-right:2px;
}

.hint {
  flex:1;
  padding-left:3px;
  background:#ffffd0;
  line-height:31px;
}

.units {
  flex:none;
  width:80px;
  margin-left:2px;
  padding:2px 4px 1px 6px;
  background:#52cfb0;
}

.units button {
  display:flex;
  align-items:center;
  justify-content:space-between;
  width:100%;
  height:28px;
  padding:0 5px;
  border:2px solid;
  border-color:#a4ecd8 #2c7c6c #2c7c6c #a4ecd8;
  background:#52cfb0;
  font-size:15px;
}

.units span {
  width:12px;
  height:7px;
  border:2px solid;
  border-color:#a4ecd8 #2c7c6c #2c7c6c #a4ecd8;
}

.message {
  flex:none;
  height:33px;
  padding:1px 2px 2px;
  border-top:2px solid #6c9898;
  border-bottom:1px solid #345;
  background:#d4f8f8;
}

.message div {
  height:27px;
  border:1px solid #000;
  background:#b0ffff;
  box-shadow:inset 3px 3px #d4ffff, inset -3px -3px #68a0a0;
}

.frame-bottom {
  flex:none;
  height:7px;
  border-bottom:2px solid #1c2c40;
  background:linear-gradient(#88a8c8, #c0dcff);
}

/* taskbar */
.taskbar {
  flex:none;
  display:flex;
  gap:4px;
  height:40px;
  padding-left:7px;
  background:linear-gradient(#3c5878, #0c2850 8%, #082044 50%, #103058);
  color:#fff;
}

.taskbar > button {
  flex:none;
  width:58px;
  border:1px solid #a0b0c8;
  border-radius:3px;
  background:linear-gradient(160deg, #7088a8, #3c5c88 45%, #284870);
}

.taskbar > button svg {
  display:block;
  width:34px;
  height:34px;
  margin:0 auto;
}

.taskbar > .start {
  width:40px;
  margin-right:9px;
  border:0;
  background:none;
}

.taskbar > .start svg {
  width:40px;
  height:40px;
}

.taskbar > .stack {
  width:54px;
  margin-right:4px;
  box-shadow:2px 0 #203c64, 3px 0 #90a4c0;
}

.taskbar > .active {
  background:linear-gradient(160deg, #c8d0dc, #8090b0 50%, #94a4c0);
}

.tray {
  flex:1;
  display:flex;
  justify-content:flex-end;
  align-items:center;
  gap:9px;
}

.clock {
  width:64px;
  font:12px/18px "Noto Sans", sans-serif;
  text-align:center;
}

.show-desktop {
  width:14px;
  height:40px;
  border:1px solid #7890b0;
  background:linear-gradient(#4c6488, #142c50);
}

/* floating popview window */
.popview {
  position:absolute;
  top:272px;
  right:114px;
  display:flex;
  flex-direction:column;
  width:657px;
  height:340px;
  padding:0 6px 6px;
  border:1px solid #c8d0d8;
  border-radius:7px;
  background:linear-gradient(100deg, #888 0, #444 10%, #0c0e10 26%, #050607 50%, #2c2e30 68%, #606468 82%, #303438 92%, #101418 100%);
  box-shadow:0 4px 14px 3px rgba(0,0,0,0.7);
}

.pop-title {
  flex:none;
  display:flex;
  height:28px;
  font:12px/26px "Noto Sans", sans-serif;
}

.pop-title .app-icon {
  margin-top:6px;
}

.pop-title span {
  margin-left:1px;
  padding:0 12px 0 4px;
  background:radial-gradient(closest-side, rgba(200,200,200,0.8), rgba(200,200,200,0));
}

.pop-x {
  width:47px;
  height:18px;
  margin-left:auto;
  border:1px solid #f0c8c0;
  border-top:0;
  border-radius:0 0 5px 5px;
  background:linear-gradient(#d89080, #b83428 50%, #c04838);
  line-height:12px;
}

.pop-body {
  flex:1;
  display:flex;
  min-height:0;
  background:#000;
  outline:1px solid #c8d0d8;
}

.pop-view {
  flex:1;
  min-width:0;
  border:3px solid;
  border-color:#2f6f63 #b4f0e0 #b4f0e0 #2f6f63;
}

.pop-view svg {
  display:block;
  width:100%;
  height:100%;
}

.pop-tools {
  flex:none;
  width:36px;
  padding:2px 1px 0;
  background:linear-gradient(#000 247px, #52cfb0 247px);
}

.pop-tools button {
  display:block;
  width:34px;
  height:33px;
  margin-bottom:2px;
  padding:1px;
  border:4px solid;
  border-color:#b4f0e8 #3f8078 #3f8078 #b4f0e8;
  background:#9cdcdc;
  outline:1px solid #52cfb0;
  outline-offset:-2px;
}

.pop-close {
  flex:none;
  padding:1px;
  background:#52cfb0;
  outline:1px solid #c8d0d8;
}

.pop-close button {
  display:block;
  width:100%;
  height:26px;
  border:3px solid;
  border-color:#c4f4f0 #488888 #488888 #c4f4f0;
  background:#9cdcdc;
}
```
